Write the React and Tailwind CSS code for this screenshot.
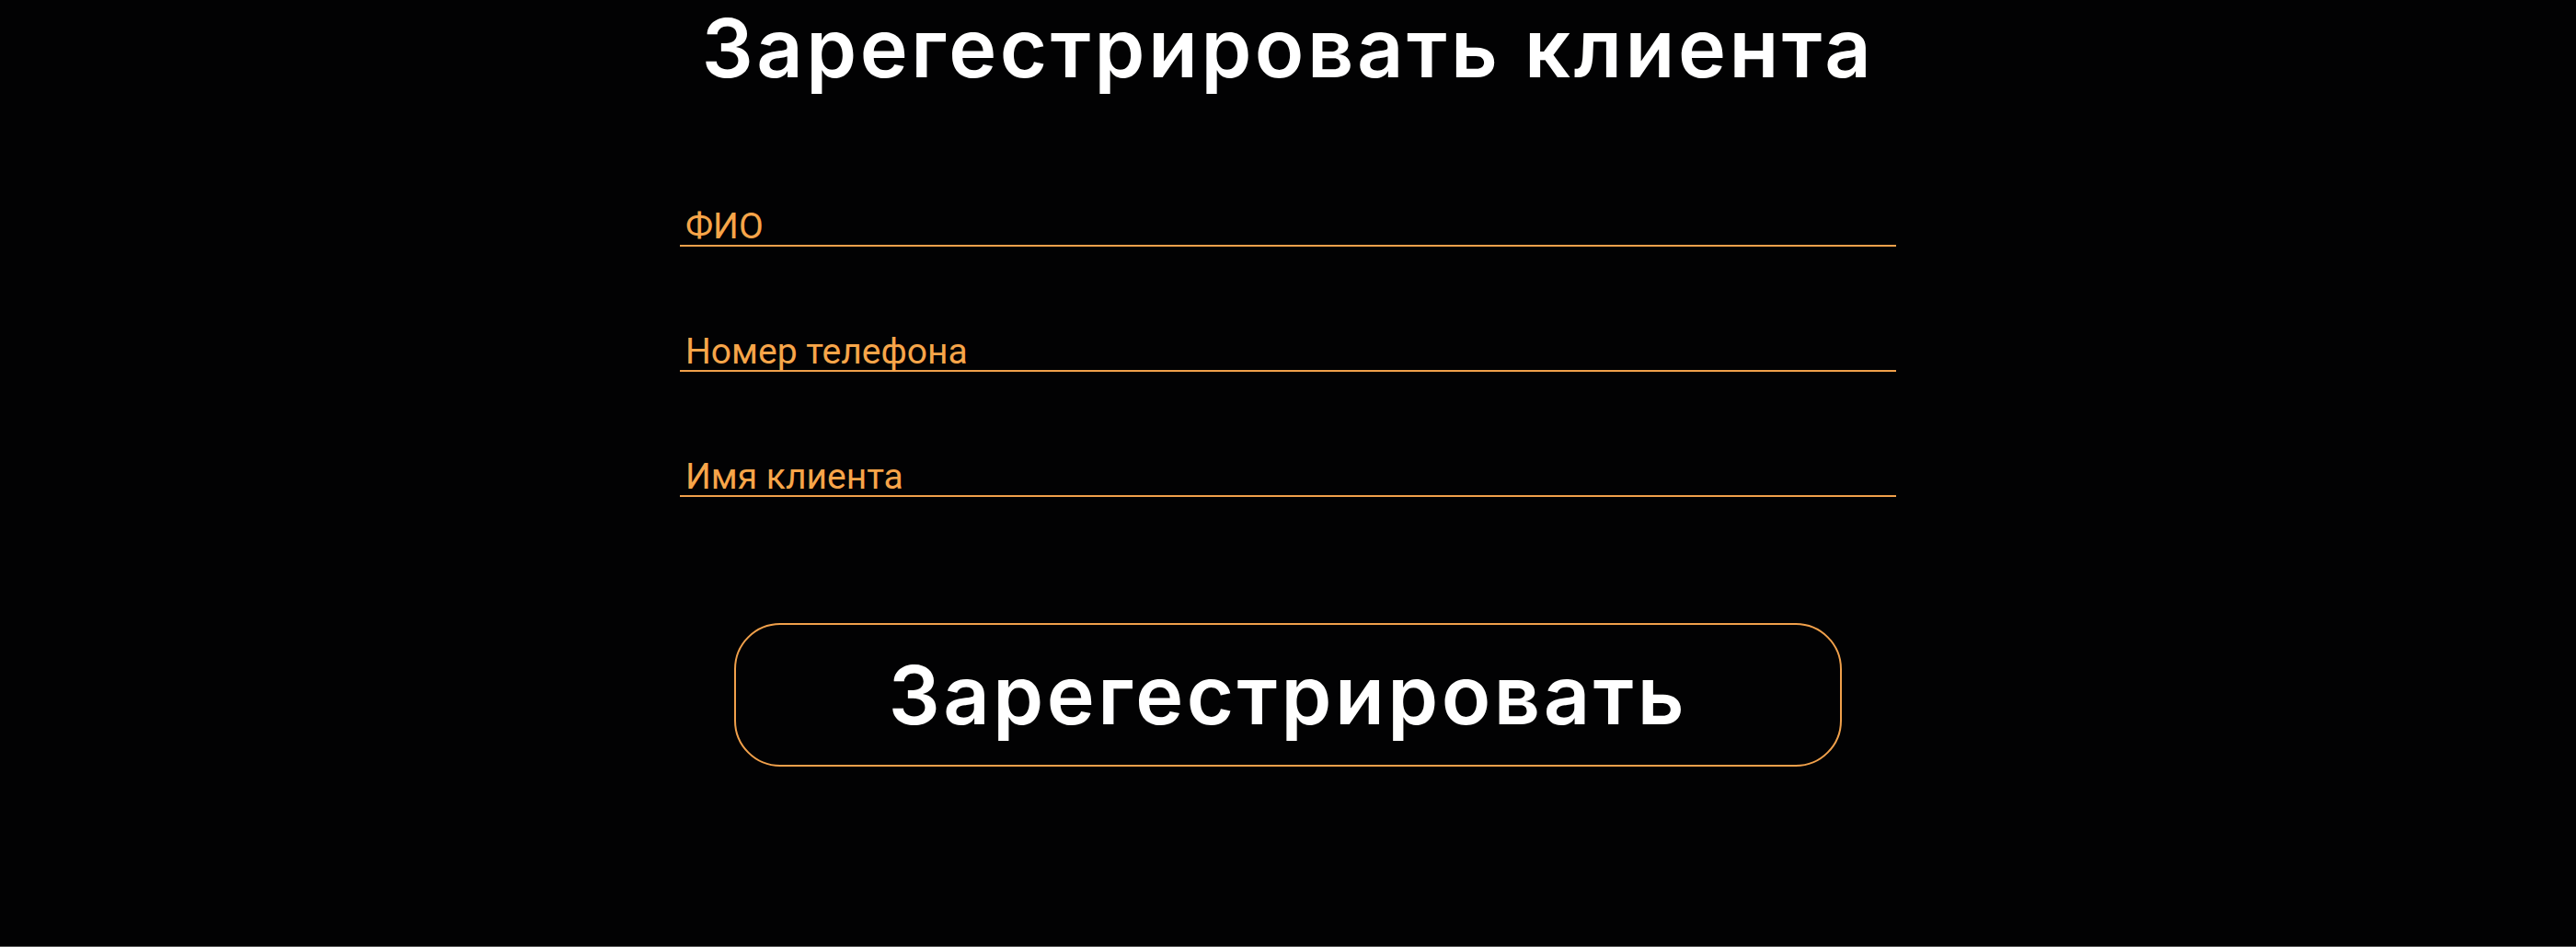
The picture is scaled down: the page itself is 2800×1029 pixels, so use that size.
export default function App() {
  const fields = ["ФИО", "Номер телефона", "Имя клиента"];

  return (
    <div className="h-[1029px] w-full bg-[#020203] border-b border-[#5a5a5a] overflow-hidden">
      <h1 className="pt-[8px] text-center text-white font-semibold text-[88px] leading-[88px] tracking-[0.04em] [font-family:Inter,'Noto_Sans',sans-serif]">
        Зарегестрировать клиента
      </h1>

      <form className="mx-auto mt-[130px] w-[1322px] flex flex-col gap-[94px]">
        {fields.map((f) => (
          <label key={f} className="flex flex-col border-b-2 border-[#f0a04b]">
            <span className="pl-[6px] text-[39px] leading-[40px] text-[#f7a549] [font-family:Roboto,sans-serif]">
              {f}
            </span>
          </label>
        ))}
      </form>

      <div className="mt-[137px] flex justify-center">
        <button
          type="button"
          className="w-[1204px] h-[156px] rounded-[50px] border-2 border-[#f0a04b] bg-transparent text-white font-semibold text-[88px] leading-none tracking-[0.04em] [font-family:Inter,'Noto_Sans',sans-serif]"
        >
          Зарегестрировать
        </button>
      </div>
    </div>
  );
}
